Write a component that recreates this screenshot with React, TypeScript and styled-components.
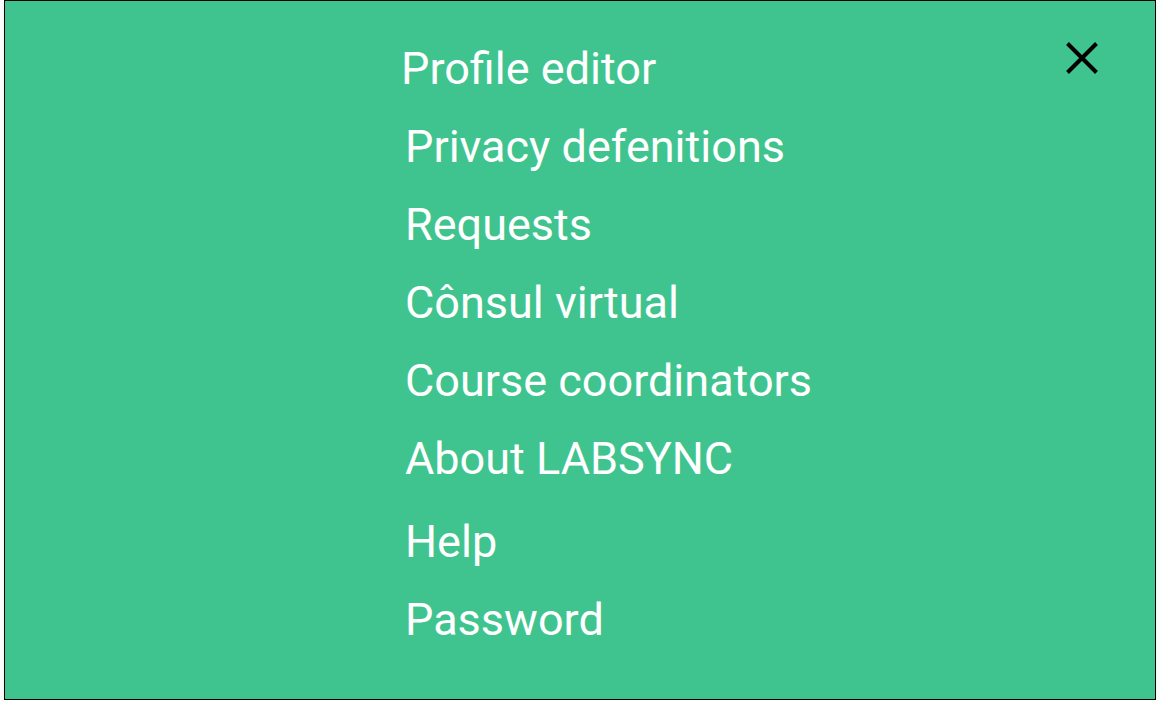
import React from "react";
import styled, { createGlobalStyle } from "styled-components";

const GlobalStyle = createGlobalStyle`
  html, body {
    margin: 0;
    padding: 0;
    background: #ffffff;
  }
  body {
    font-family: Roboto, "Liberation Sans", Arial, sans-serif;
  }
`;

const items = [
  "Privacy defenitions",
  "Requests",
  "Cônsul virtual",
  "Course coordinators",
  "About LABSYNC",
];

export default function App() {
  return (
    <>
      <GlobalStyle />
      <Panel>
        <Menu>
          <MenuItem lead>Profile editor</MenuItem>
          {items.map((label) => (
            <MenuItem key={label}>{label}</MenuItem>
          ))}
          <MenuItem spaced>Help</MenuItem>
          <MenuItem>Password</MenuItem>
        </Menu>
        <CloseButton aria-label="Close">
          <svg width="40" height="40" viewBox="0 0 40 40">
            <path
              d="M5.5 5.5 L34.5 34.5 M34.5 5.5 L5.5 34.5"
              stroke="#000"
              strokeWidth="4"
              fill="none"
            />
          </svg>
        </CloseButton>
      </Panel>
    </>
  );
}

const Panel = styled.div`
  display: flex;
  align-items: flex-start;
  box-sizing: border-box;
  width: 1152px;
  height: 700px;
  margin-left: 4px;
  padding: 29px 0 0 400px;
  background: #40c48f;
  border: 1px solid #000;
  box-shadow: 0 3px 6px rgba(0, 0, 0, 0.08);
`;

const Menu = styled.nav`
  display: flex;
  flex-direction: column;
`;

const MenuItem = styled.a<{ lead?: boolean; spaced?: boolean }>`
  display: block;
  color: #ffffff;
  font-size: 45px;
  line-height: 78px;
  white-space: nowrap;
  cursor: pointer;
  margin-left: ${(p) => (p.lead ? "-4px" : "0")};
  margin-top: ${(p) => (p.spaced ? "5px" : "0")};
`;

const CloseButton = styled.button`
  display: flex;
  align-items: center;
  justify-content: center;
  margin: 8px 53px 0 auto;
  padding: 0;
  width: 40px;
  height: 40px;
  border: none;
  background: transparent;
  cursor: pointer;
`;
